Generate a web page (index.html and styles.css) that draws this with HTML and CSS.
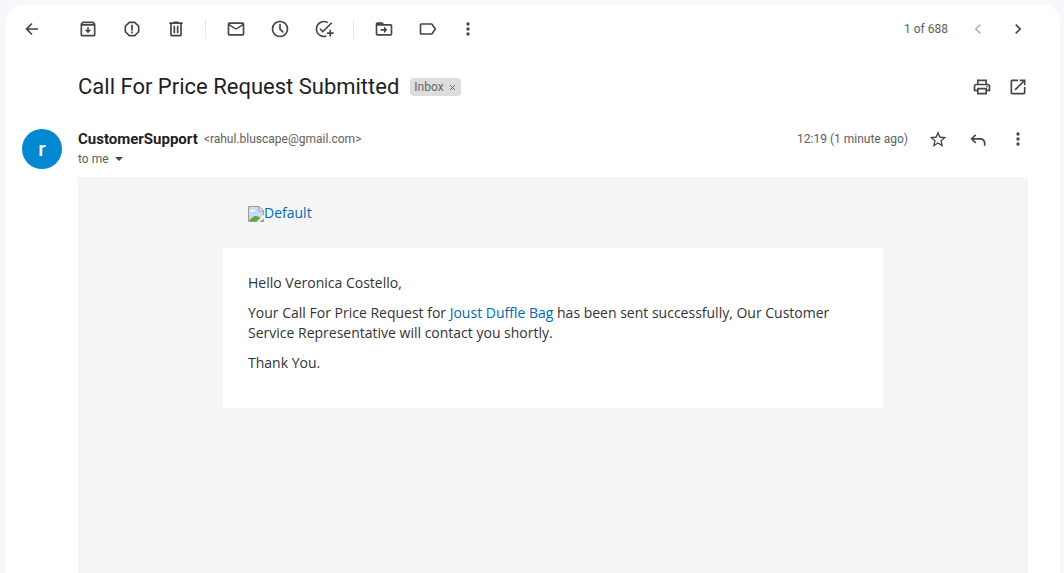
FILE: index.html
```html
<!DOCTYPE html>
<html lang="en">
<head>
<meta charset="utf-8">
<meta name="viewport" content="width=device-width, initial-scale=1">
<title>Call For Price Request Submitted</title>
<link rel="stylesheet" href="styles.css">
</head>
<body>
<main class="card">
  <header class="toolbar">
    <button class="icon-btn back" aria-label="Back"><svg viewBox="0 0 24 24"><path d="M19.200 11H7.800l4.900-4.900L11.300 4.700 4 12l7.300 7.300 1.400-1.400L7.800 13h11.400z"/></svg></button>
    <div class="group">
      <button class="icon-btn" aria-label="Archive"><svg viewBox="0 0 24 24"><path d="M20.540 5.230l-1.390-1.680C18.880 3.210 18.470 3 18 3H6c-.47 0-.88.21-1.160.55L3.460 5.230C3.170 5.570 3 6.020 3 6.500V19c0 1.100.9 2 2 2h14c1.100 0 2-.9 2-2V6.500c0-.48-.17-.93-.46-1.270zM6.240 5h11.520l.83 1H5.420zM5 19V8h14v11z"/><path d="M11 10h2v3h3l-4 4-4-4h3z"/></svg></button>
      <button class="icon-btn" aria-label="Report spam"><svg viewBox="0 0 24 24"><path d="M15.730 3H8.270L3 8.270v7.460L8.270 21h7.460L21 15.730V8.270zM19 14.900L14.900 19H9.100L5 14.900V9.100L9.100 5h5.800L19 9.100z"/><path d="M11 7h2v7h-2zm0 8h2v2h-2z"/></svg></button>
      <button class="icon-btn" aria-label="Delete"><svg viewBox="0 0 24 24"><path d="M15 4V3H9v1H4v2h1v13c0 1.100.9 2 2 2h10c1.100 0 2-.9 2-2V6h1V4zm2 15H7V6h10z"/><path d="M9 8h2v9H9zm4 0h2v9h-2z"/></svg></button>
    </div>
    <div class="group divided">
      <button class="icon-btn" aria-label="Mark as unread"><svg viewBox="0 0 24 24"><path d="M20 4H4c-1.100 0-2 .9-2 2v12c0 1.100.9 2 2 2h16c1.100 0 2-.9 2-2V6c0-1.100-.9-2-2-2zm0 14H4V8l8 5 8-5zm-8-7L4 6h16z"/></svg></button>
      <button class="icon-btn" aria-label="Snooze"><svg viewBox="0 0 24 24"><path d="M12 2a10 10 0 1 0 0 20 10 10 0 0 0 0-20zm0 18a8 8 0 1 1 0-16 8 8 0 0 1 0 16z"/><path d="M13 6h-2v6.500l4.200 4.200 1.400-1.400L13 11.700z"/></svg></button>
      <button class="icon-btn" aria-label="Add to tasks"><svg viewBox="0 0 24 24"><path d="M14.500 19.600A8 8 0 1 1 15.800 5l1.500-1.500A10 10 0 1 0 15 21.500z"/><path d="M22 5.200L10.600 16.600 6.400 12.400l1.400-1.400 2.800 2.800 10-10zM18.500 13h2v3h3v2h-3v3h-2v-3h-3v-2h3z"/></svg></button>
    </div>
    <div class="group divided">
      <button class="icon-btn" aria-label="Move to"><svg viewBox="0 0 24 24"><path d="M20 6h-8l-2-2H4a2 2 0 0 0-2 2v12c0 1.100.9 2 2 2h16c1.100 0 2-.9 2-2V8c0-1.100-.9-2-2-2zm0 12H4V8h16z"/><path d="M8 12v2h4v3l4-4-4-4v3z"/></svg></button>
      <button class="icon-btn" aria-label="Labels"><svg viewBox="0 0 24 24"><path d="M16 5H4a2 2 0 0 0-2 2v10c0 1.100.9 2 2 2h12c.7 0 1.300-.3 1.600-.8L22 12l-4.400-6.200C17.300 5.300 16.700 5 16 5zm0 12H4V7h12l3.600 5z"/></svg></button>
      <button class="icon-btn narrow" aria-label="More"><svg viewBox="0 0 24 24"><circle cx="12" cy="6" r="2"/><circle cx="12" cy="12" r="2"/><circle cx="12" cy="18" r="2"/></svg></button>
    </div>
    <div class="actions spaced">
      <span class="meta">1 of 688</span>
      <button class="icon-btn" aria-label="Newer" disabled><svg viewBox="0 0 24 24"><path d="M15.400 7.400L14 6l-6 6 6 6 1.400-1.400L10.800 12z"/></svg></button>
      <button class="icon-btn" aria-label="Older"><svg viewBox="0 0 24 24"><path d="M8.600 7.400L10 6l6 6-6 6-1.400-1.400L13.200 12z"/></svg></button>
    </div>
  </header>

  <section class="subject-row">
    <h1 class="subject">Call For Price Request Submitted</h1>
    <span class="label">Inbox <button class="label-remove" aria-label="Remove label Inbox"><svg viewBox="0 0 8 8"><path d="M1 2l5 5M6 2L1 7"/></svg></button></span>
    <div class="actions">
      <button class="icon-btn" aria-label="Print all"><svg viewBox="0 0 24 24"><path d="M19 8h-1V3H6v5H5c-1.660 0-3 1.340-3 3v6h4v4h12v-4h4v-6c0-1.660-1.340-3-3-3zM8 5h8v3H8zm8 14H8v-4h8zm4-4h-2v-2H6v2H4v-4c0-.55.45-1 1-1h14c.55 0 1 .45 1 1z"/><circle cx="18" cy="11.500" r="1"/></svg></button>
      <button class="icon-btn" aria-label="Open in new window"><svg viewBox="0 0 24 24"><path d="M19 19H5V5h7V3H5a2 2 0 0 0-2 2v14c0 1.100.9 2 2 2h14c1.100 0 2-.9 2-2v-7h-2zM14 3v2h3.590l-9.830 9.830 1.410 1.410L19 6.410V10h2V3z"/></svg></button>
    </div>
  </section>

  <section class="sender-row">
    <div class="avatar" aria-hidden="true">r</div>
    <div class="sender">
      <div class="from"><strong class="name">CustomerSupport</strong><span class="address">&lt;rahul.bluscape@gmail.com&gt;</span></div>
      <button class="recipients" aria-label="Show details">to me <span class="caret"></span></button>
    </div>
    <div class="actions spaced top">
      <span class="meta">12:19 (1 minute ago)</span>
      <button class="icon-btn" aria-label="Star"><svg viewBox="0 0 24 24"><path d="M22 9.740l-7.190-.62L12 2.500 9.190 9.130 2 9.740l5.460 4.730L5.820 21.500 12 17.770l6.180 3.730-1.630-7.030zM12 15.900l-3.760 2.270 1-4.280-3.320-2.880 4.380-.38L12 6.600l1.710 4.040 4.380.38-3.320 2.880 1 4.280z"/></svg></button>
      <button class="icon-btn" aria-label="Reply"><svg viewBox="0 0 24 24"><path d="M8.600 6.200L10 7.600 6.800 10.800H15c3.300 0 6 2.700 6 6V20h-2v-3.200c0-2.200-1.800-4-4-4H6.800L10 16l-1.400 1.400L3 11.800z"/></svg></button>
      <button class="icon-btn" aria-label="More message options"><svg viewBox="0 0 24 24"><circle cx="12" cy="6" r="2"/><circle cx="12" cy="12" r="2"/><circle cx="12" cy="18" r="2"/></svg></button>
    </div>
  </section>

  <article class="email">
    <div class="email-inner">
      <div class="email-head">
        <a class="logo" href="#"><svg class="broken" viewBox="0 0 16 16" aria-hidden="true"><path d="M.5.500H11l4.500 4.500v10.500H.5z" fill="#c9d9f7" stroke="#9a9a9a"/><path d="M2 5.500c0-1.500 1.600-2 2.300-1.200C5 2.800 7 3.200 7 5.500z" fill="#fff"/><path d="M1 15c2-3 4.500-5 7-5 3 0 5 2.500 7 5z" fill="#5aad37"/><path d="M11 .5V5h4.500z" fill="#fff" stroke="#9a9a9a"/><path d="M16 8.500L8.500 16h3L16 12z" fill="#f5f5f5"/></svg>Default</a>
      </div>
      <div class="email-body">
        <p>Hello Veronica Costello,</p>
        <p>Your Call For Price Request for <a href="#">Joust Duffle Bag</a> has been sent successfully, Our Customer Service Representative will contact you shortly.</p>
        <p>Thank You.</p>
      </div>
    </div>
  </article>
</main>
</body>
</html>
```
FILE: styles.css
```css
* { box-sizing: border-box; }

body {
  margin: 0;
  min-height: 100vh;
  display: flex;
  padding: 5px 4px 0 6px;
  background: #f6f8fc;
  font-family: Roboto, "Liberation Sans", sans-serif;
  font-size: 12px;
  color: #5e5e5e;
}

button {
  padding: 0;
  border: 0;
  background: none;
  font: inherit;
  color: inherit;
  cursor: pointer;
}

.card {
  flex: 1;
  display: flex;
  flex-direction: column;
  background: #fff;
  border-radius: 16px 16px 0 0;
}

.toolbar {
  display: flex;
  align-items: center;
  height: 48px;
  padding: 0 28px 0 12px;
}

.icon-btn {
  display: flex;
  align-items: center;
  justify-content: center;
  width: 28px;
  height: 28px;
  color: #444746;
}
.icon-btn svg { width: 20px; height: 20px; fill: currentColor; }
.icon-btn:disabled { color: #b4b5b5; cursor: default; }
.icon-btn.narrow { width: 20px; }
.back { margin-right: 28px; }

.group { display: flex; align-items: center; gap: 16px; }
.divided {
  height: 20px;
  margin-left: 15px;
  padding-left: 16px;
  border-left: 1px solid #e9e9e9;
}

.actions { display: flex; align-items: center; gap: 8px; margin-left: auto; }
.spaced { gap: 12px; }
.meta { margin-right: 4px; white-space: nowrap; }

.subject-row {
  display: flex;
  align-items: center;
  height: 68px;
  padding: 0 28px 0 72px;
}
.subject {
  margin: 0 11px 0 0;
  font-size: 22px;
  line-height: 28px;
  font-weight: 400;
  color: #1f1f1f;
}
.label {
  display: flex;
  align-items: center;
  gap: 5px;
  height: 18px;
  padding: 0 4px;
  border-radius: 4px;
  background: #ddd;
  color: #666;
}
.label-remove { display: flex; }
.label-remove svg { width: 8px; height: 8px; stroke: currentColor; fill: none; }

.sender-row {
  display: flex;
  padding: 8px 28px 8px 16px;
}
.avatar {
  display: flex;
  align-items: center;
  justify-content: center;
  width: 40px;
  height: 40px;
  margin-right: 16px;
  border-radius: 50%;
  background: #0288d1;
  color: #fff;
  font-size: 21px;
  font-weight: 500;
}
.sender { line-height: 20px; }
.from { display: flex; gap: 6px; }
.name { font-size: 15px; font-weight: 700; color: #1f1f1f; }
.recipients { display: flex; align-items: center; gap: 6px; line-height: 20px; }
.caret {
  border: 4px solid transparent;
  border-top-color: #444746;
  border-bottom: 0;
}
.top { height: 20px; }

.email {
  flex: 1;
  margin: 0 32px 0 72px;
  background: #f5f5f5;
  font-family: "Open Sans", sans-serif;
  font-size: 14px;
  line-height: 20px;
  color: #333;
}
.email a { color: #006bb4; text-decoration: none; }
.email-inner { max-width: 660px; margin: 0 auto; }
.email-head { padding: 25px; }
.logo { display: flex; align-items: flex-end; line-height: 21px; }
.broken { width: 16px; height: 16px; margin-bottom: 1px; }
.email-body { padding: 25px; background: #fff; }
.email-body p { margin: 0 0 10px; }
```
